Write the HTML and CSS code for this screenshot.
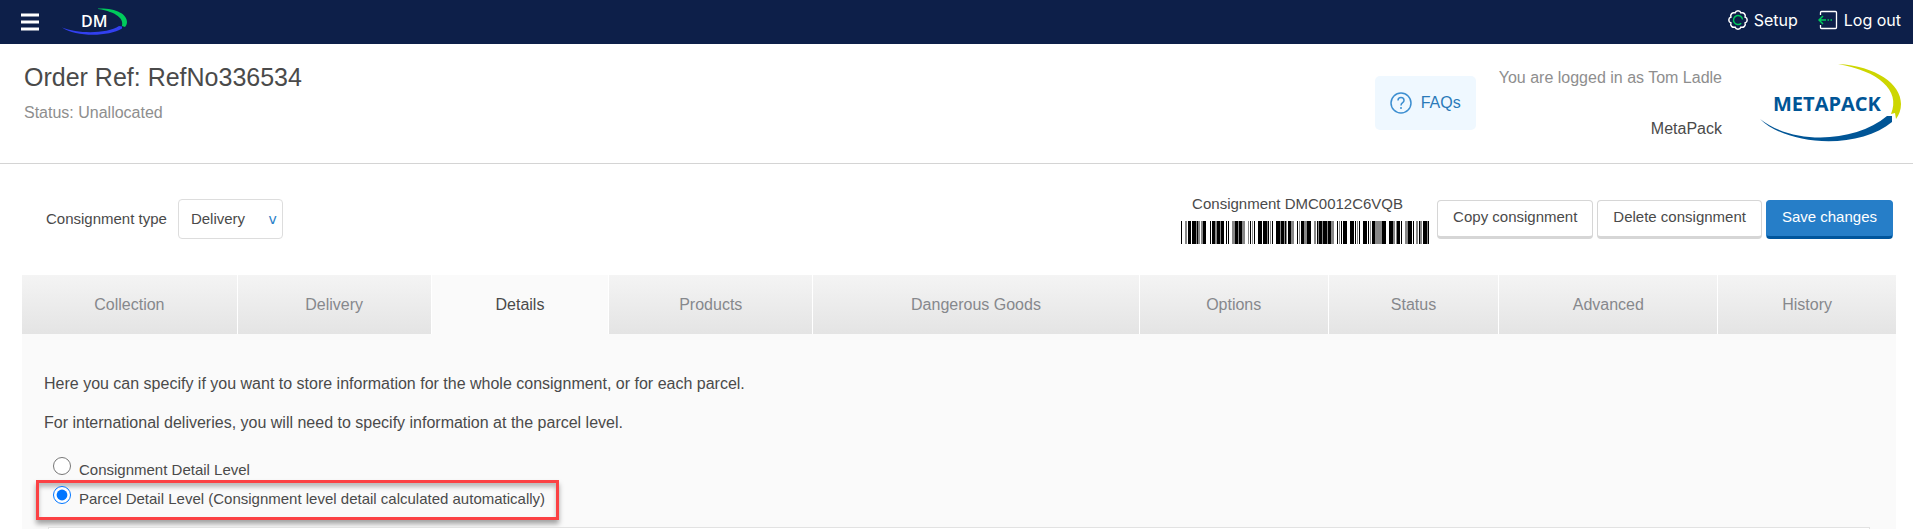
FILE: index.html
```
<!DOCTYPE html>
<html lang="en">
<head>
<meta charset="UTF-8" />
<meta name="viewport" content="width=device-width, initial-scale=1" />
<title>Order Ref: RefNo336534</title>
<link rel="stylesheet" href="styles.css">
</head>
<body>

<header class="topbar">
  <div class="topbar-left">
    <button class="menu-btn" type="button" aria-label="Menu">
      <svg width="20" height="18" viewBox="0 0 20 18"><path d="M1 2h18M1 9h18M1 16h18" stroke="#fff" stroke-width="3" /></svg>
    </button>
    <a class="dm-logo" href="#" aria-label="DM">
      <svg width="66" height="28" viewBox="0 0 66 28">
        <path d="M36 .5C54 0 65 6 65 14c0 2-1 4-2 5l-3-1c2-7-5-14-24-17z" fill="#00cb5c" />
        <path d="M0 19.500C16 26 45 26 57 18l3 .5v2C46 29 14 29 0 19.500z" fill="#3240f0" />
        <text x="19" y="19" class="dm-text">DM</text>
      </svg>
    </a>
  </div>
  <nav class="topbar-right">
    <a href="#">
      <svg width="20" height="20" viewBox="0 0 20 20" fill="none">
        <path d="M17.100 7A3.200 3.200 0 0 1 17.100 13A3.200 3.200 0 0 1 13 17.100A3.200 3.200 0 0 1 7 17.100A3.200 3.200 0 0 1 2.900 13A3.200 3.200 0 0 1 2.900 7A3.200 3.200 0 0 1 7 2.900A3.200 3.200 0 0 1 13 2.900A3.200 3.200 0 0 1 17.100 7Z" stroke="#fff" stroke-width="1.500" />
        <path d="M13.200 13.200A4.500 4.500 0 1 1 14.500 9.500" stroke="#00cb5c" stroke-width="1.400" />
      </svg>
      <span>Setup</span>
    </a>
    <a href="#">
      <svg width="20" height="20" viewBox="0 0 20 20" fill="none">
        <path d="M2.500 5V2.500Q2.500 1.500 3.500 1.500H17.500Q18.500 1.500 18.500 2.500V17.500Q18.500 18.500 17.500 18.500H3.500Q2.500 18.500 2.500 17.500V15" stroke="#fff" stroke-width="1.300" />
        <path d="M5 6L1 10L5 14M1 10H8M9.500 10H11M12.500 10H14" stroke="#00cb5c" stroke-width="1.500" />
      </svg>
      <span>Log out</span>
    </a>
  </nav>
</header>

<section class="order-header">
  <div class="order-info">
    <h1>Order Ref: RefNo336534</h1>
    <p>Status: Unallocated</p>
  </div>
  <a class="faqs" href="#">
    <svg width="22" height="22" viewBox="0 0 22 22" fill="none" stroke="#3d8fd1" stroke-width="1.500">
      <circle cx="11" cy="11" r="10" />
      <path d="M8 8.500C8 4.500 14 4.500 14 8.500C14 10.800 11 10.500 11 13.500M11 15v2" />
    </svg>
    <span>FAQs</span>
  </a>
  <div class="user-info">
    <p class="logged-in">You are logged in as Tom Ladle</p>
    <p>MetaPack</p>
  </div>
  <svg class="brand" width="142" height="80" viewBox="0 0 142 80" role="img" aria-label="Metapack">
    <path d="M78 1C116 3 141 21 141 41c0 6-2 11-5 15l-1-6-4 1C141 27 118 8 78 1z" fill="#cdd600" />
    <path d="M0 56C33 82 95 80 127 53h5v6C99 87 27 83 0 56z" fill="#005596" />
    <text x="13" y="48" class="brand-text">METAPACK</text>
  </svg>
</section>

<main>
  <div class="toolbar">
    <label for="consignment-type">Consignment type</label>
    <div class="select-wrap">
      <select id="consignment-type">
        <option>Delivery</option>
        <option>Collection</option>
      </select>
    </div>
    <div class="barcode">
      <span>Consignment DMC0012C6VQB</span>
      <svg width="248" height="23" viewBox="0 0 248 23" preserveAspectRatio="none" shape-rendering="crispEdges">
        <g fill="none" stroke-width="23">
          <path stroke="#888" d="M4 11.500h21M29 11.500h15M51 11.500h13M67 11.500h7M77 11.500h15M95 11.500h18M116 11.500h14M133 11.500h20M156 11.500h10M169 11.500h10M182 11.500h23M208 11.500h13M224 11.500h9M235 11.500h13" />
          <path stroke="#fff" d="M6 11.500h1M10 11.500h1M19 11.500h1M30 11.500h1M43 11.500h1M46 11.500h1M68 11.500h1M70 11.500h1M72 11.500h1M81 11.500h1M88 11.500h1M90 11.500h1M106 11.500h1M117 11.500h1M119 11.500h1M135 11.500h1M157 11.500h1M159 11.500h1M161 11.500h1M173 11.500h1M175 11.500h1M177 11.500h1M186 11.500h1M188 11.500h1M190 11.500h1M214 11.500h1M219 11.500h1M231 11.500h1M237 11.500h1M241 11.500h1" />
          <path stroke="#000" d="M0 11.500h1M7 11.500h3M11 11.500h4M16 11.500h1M22 11.500h3M29 11.500h1M31 11.500h3M36 11.500h3M40 11.500h3M45 11.500h1M47 11.500h1M54 11.500h3M58 11.500h3M69 11.500h1M73 11.500h1M77 11.500h4M82 11.500h4M87 11.500h1M91 11.500h1M95 11.500h4M100 11.500h3M104 11.500h1M107 11.500h3M116 11.500h1M120 11.500h3M126 11.500h4M136 11.500h1M138 11.500h3M142 11.500h4M147 11.500h3M156 11.500h1M160 11.500h1M162 11.500h4M169 11.500h4M174 11.500h1M178 11.500h1M182 11.500h4M187 11.500h1M191 11.500h3M201 11.500h4M208 11.500h4M216 11.500h3M220 11.500h1M227 11.500h4M232 11.500h1M238 11.500h1M242 11.500h4M247 11.500h1" />
        </g>
      </svg>
    </div>
    <div class="actions">
      <button type="button">Copy consignment</button>
      <button type="button">Delete consignment</button>
      <button type="button" class="primary">Save changes</button>
    </div>
  </div>

  <nav class="tabs">
    <a href="#">Collection</a>
    <a href="#">Delivery</a>
    <a href="#" class="active">Details</a>
    <a href="#">Products</a>
    <a href="#">Dangerous Goods</a>
    <a href="#">Options</a>
    <a href="#">Status</a>
    <a href="#">Advanced</a>
    <a href="#">History</a>
  </nav>

  <div class="panel">
    <p>Here you can specify if you want to store information for the whole consignment, or for each parcel.</p>
    <p>For international deliveries, you will need to specify information at the parcel level.</p>
    <div class="option">
      <input type="radio" id="level-consignment" name="level" />
      <label for="level-consignment">Consignment Detail Level</label>
    </div>
    <div class="option highlight">
      <input type="radio" id="level-parcel" name="level" checked />
      <label for="level-parcel">Parcel Detail Level (Consignment level detail calculated automatically)</label>
    </div>
    <div class="parcel-box"></div>
  </div>
</main>

</body>
</html>
```
FILE: styles.css
```
* {
  box-sizing: border-box;
}
body {
  display: flex;
  flex-direction: column;
  min-height: 100vh;
  margin: 0;
  font-family: "Liberation Sans", Arial, sans-serif;
  font-size: 16px;
  line-height: 20px;
  color: #4a4a4a;
  background-color: #fff;
}
a {
  text-decoration: none;
}
p, h1 {
  margin: 0;
}
svg {
  display: block;
  flex-shrink: 0;
}

/* Top bar */
.topbar {
  display: flex;
  justify-content: space-between;
  height: 44px;
  padding: 0 12px 0 20px;
  background-color: #0d1f49;
}
.topbar-left,
.topbar-right,
.topbar-right a {
  display: flex;
  align-items: center;
}
.topbar-left {
  gap: 22px;
}
.topbar-right {
  gap: 20px;
  padding-bottom: 4px;
}
.topbar-right a {
  gap: 6px;
  color: #fff;
  font-family: Inter, sans-serif;
}
.menu-btn {
  padding: 0;
  border: none;
  background: none;
  cursor: pointer;
}
.dm-text {
  font: 600 16px "Open Sans", sans-serif;
  fill: #fff;
}

/* Order header */
.order-header {
  display: flex;
  align-items: flex-start;
  padding: 19px 11px 20px 24px;
  border-bottom: 1px solid #d4d4d4;
}
.order-info {
  flex: 1;
}
.order-info h1 {
  font-size: 25px;
  font-weight: normal;
  line-height: 28px;
}
.order-info p {
  margin-top: 12px;
  color: #8e8e8e;
}
.faqs {
  display: flex;
  align-items: center;
  gap: 9px;
  height: 54px;
  margin: 13px 23px 0 0;
  padding: 0 15px;
  border-radius: 5px;
  background-color: #eff8ff;
  color: #2a7ab9;
}
.user-info {
  margin: 5px 38px 0 0;
  text-align: right;
}
.user-info .logged-in {
  margin-bottom: 31px;
  color: #8e8e8e;
}
.brand-text {
  font: bold 20px "Open Sans", sans-serif;
  fill: #005596;
}

/* Toolbar */
main {
  display: flex;
  flex: 1;
  flex-direction: column;
  padding: 0 17px 0 22px;
}
.toolbar {
  display: flex;
  align-items: center;
  padding: 30px 3px 31px 24px;
  font-size: 15px;
}
.select-wrap {
  position: relative;
  margin-left: 11px;
}
.select-wrap::after {
  content: "v";
  position: absolute;
  top: 10px;
  right: 6px;
  color: #2a80c8;
  font-family: "DejaVu Sans", sans-serif;
  font-size: 14px;
  pointer-events: none;
}
select {
  appearance: none;
  width: 105px;
  height: 40px;
  padding: 0 12px;
  border: 1px solid #ddd;
  border-radius: 4px;
  background-color: #fff;
  color: #4a4a4a;
  font: inherit;
}
.barcode {
  display: flex;
  flex-direction: column;
  gap: 7px;
  margin: 0 8px 0 auto;
}
.barcode span {
  padding-left: 11px;
}
.actions {
  display: flex;
  gap: 4px;
}
.actions button {
  height: 39px;
  padding: 0 15px 2px;
  border: 1px solid #d6d6d6;
  border-bottom-width: 3px;
  border-radius: 4px;
  background-color: #fff;
  color: #4a4a4a;
  font: inherit;
  cursor: pointer;
}
.actions .primary {
  border-color: #267ec8;
  border-bottom-color: #00559c;
  background-color: #267ec8;
  color: #fff;
}

/* Tabs */
.tabs {
  display: grid;
  grid-template-columns: 215fr 193fr 177fr 203fr 326fr 188fr 170fr 218fr 178fr;
  gap: 1px;
}
.tabs a {
  padding: 20px 0 19px;
  background-image: linear-gradient(#f4f4f4, #e4e4e4);
  color: #86888c;
  text-align: center;
}
.tabs .active {
  background: #fafafa;
  color: #4a4a4a;
}

/* Details panel */
.panel {
  display: flex;
  flex: 1;
  flex-direction: column;
  padding: 40px 26px 0;
  background-color: #fafafa;
}
.panel p {
  margin: 0 -4px 19px;
}
.option {
  display: flex;
  align-items: flex-start;
  font-size: 15px;
}
.panel p + .option {
  padding: 5px 5px 0;
}
.option input {
  width: 18px;
  height: 18px;
  margin: 0 8px 0 0;
}
.option label {
  padding-top: 3px;
}
.highlight {
  width: fit-content;
  margin: 0 0 7px -12px;
  padding: 3px 11px 8px 14px;
  border: 3px solid #fb4144;
  box-shadow: 0 4px 5px rgba(0, 0, 0, 0.35), inset 0 4px 4px rgba(0, 0, 0, 0.25);
}
.parcel-box {
  flex: 1;
  border: 1px solid #e2e2e2;
  border-bottom: none;
  background-color: #fff;
}
```
